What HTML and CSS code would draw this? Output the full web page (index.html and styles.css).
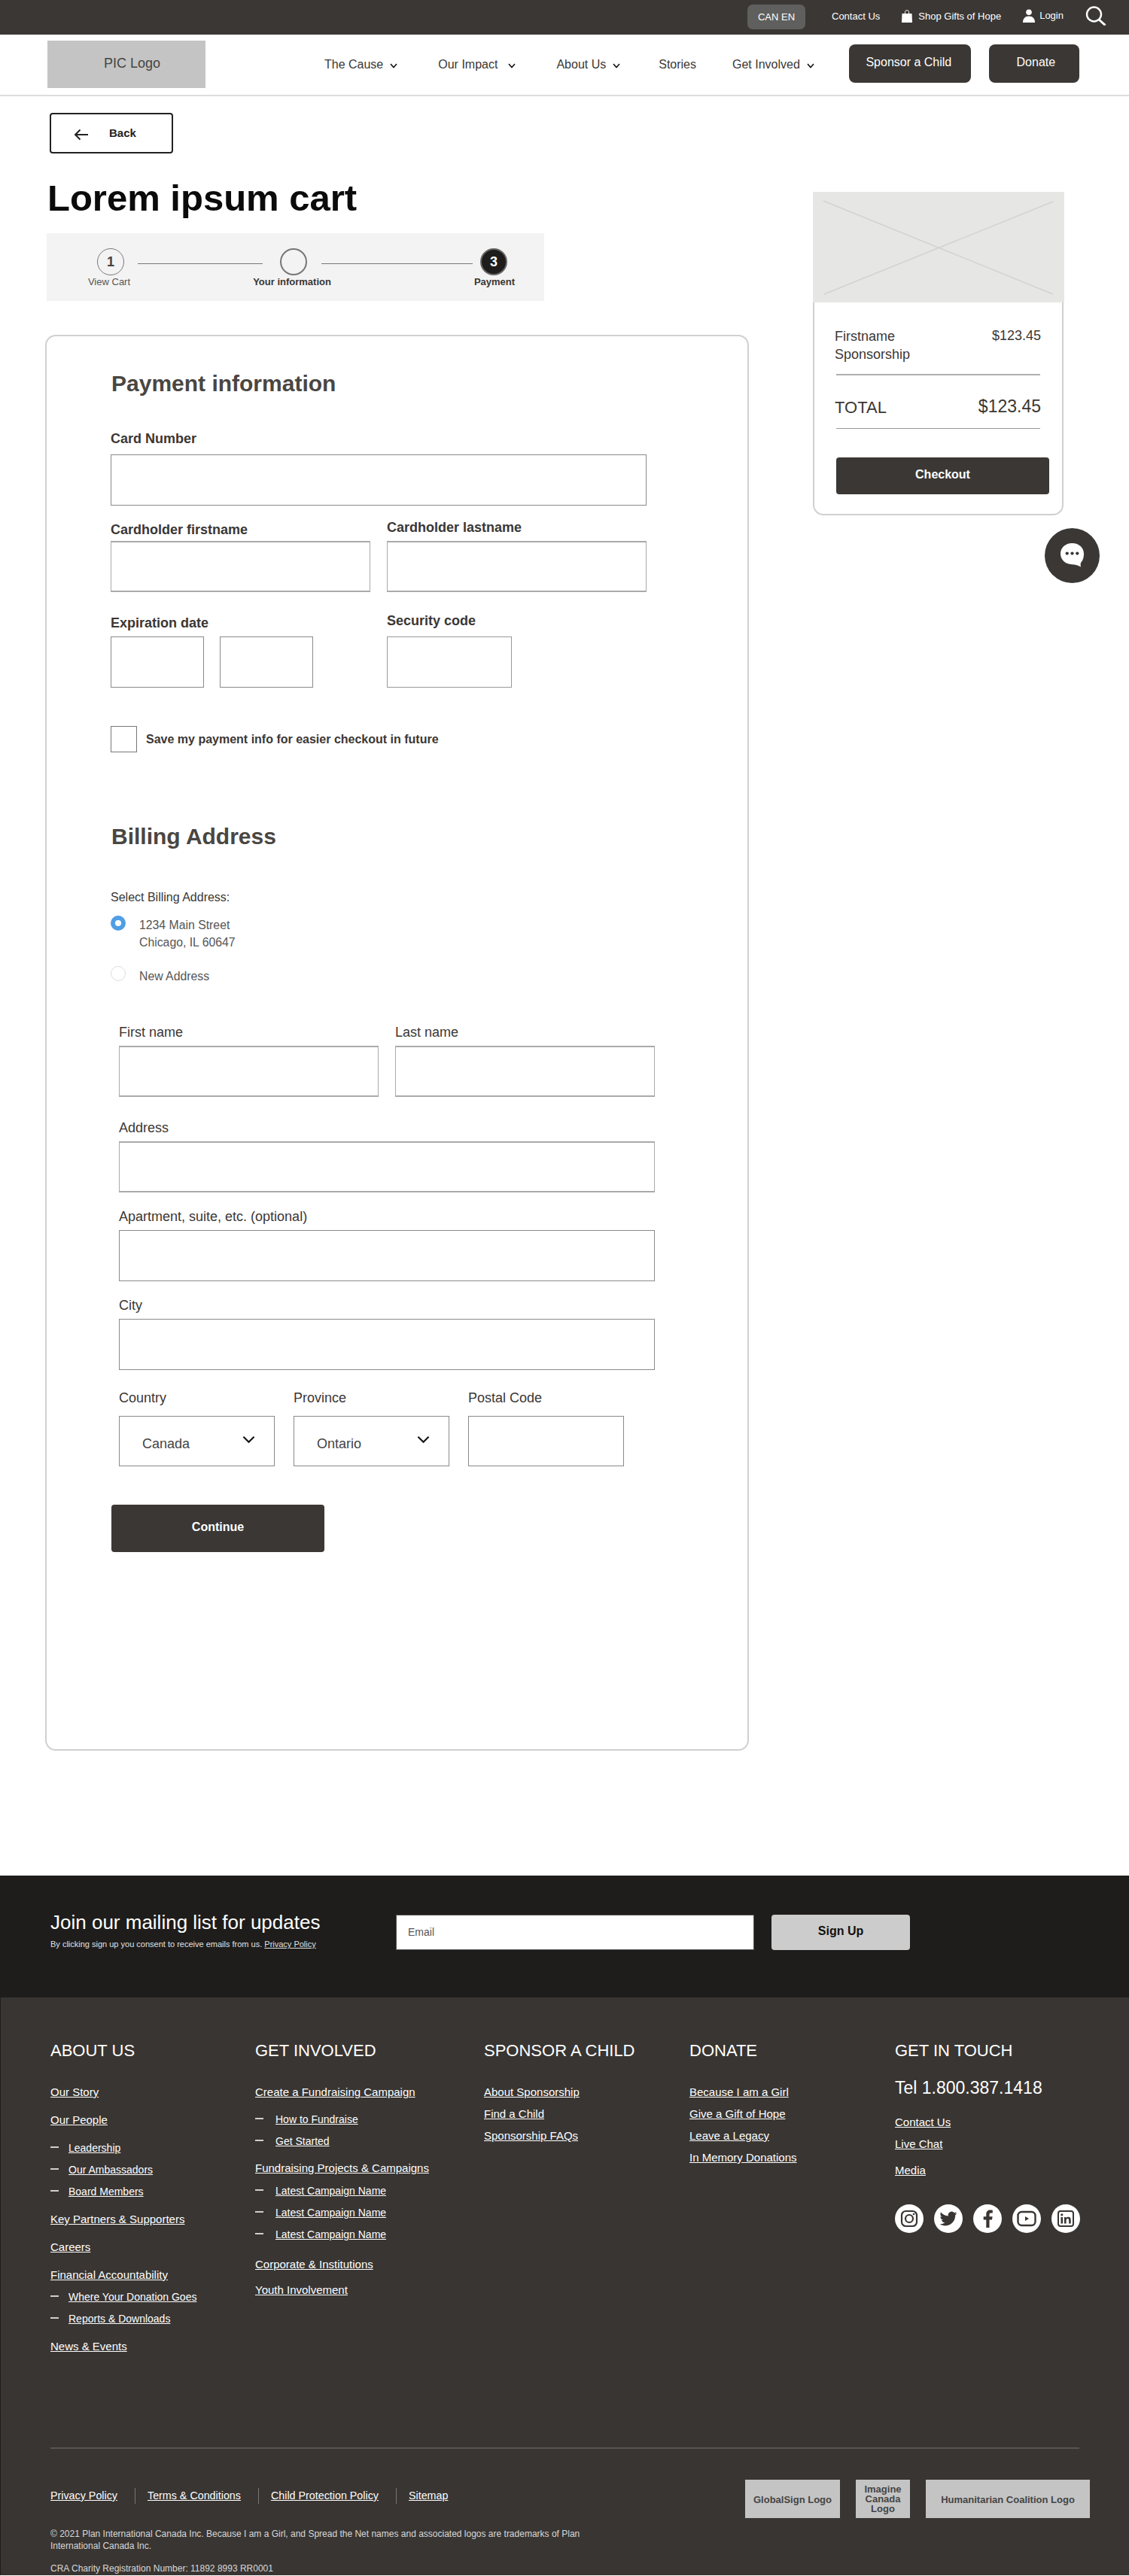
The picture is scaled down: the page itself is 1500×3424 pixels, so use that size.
FILE: index.html
```html
<!DOCTYPE html>
<html lang="en">
<head>
<meta charset="utf-8">
<title>Lorem ipsum cart</title>
<link rel="stylesheet" href="styles.css">
</head>
<body>
<header>
  <div class="topbar">
    <span class="locale">CAN EN</span>
    <a class="top-link contact">Contact Us</a>
    <svg class="bag" viewBox="0 0 14 17"><path d="M0.5 5H13.5L14 17H0L0.5 5Z" fill="#fff"/><path d="M4.5 6V3.2C4.5 1.6 5.6 .7 7 .7S9.5 1.6 9.5 3.2V6" fill="none" stroke="#fff" stroke-width="1"/></svg>
    <a class="top-link shop">Shop Gifts of Hope</a>
    <svg class="person" viewBox="0 0 16 18"><circle cx="8" cy="4.2" r="3.8" fill="#fff"/><path d="M0 18C0 12.5 3 9.5 8 9.5S16 12.5 16 18Z" fill="#fff"/></svg>
    <a class="top-link login">Login</a>
    <svg class="search" viewBox="0 0 28 26"><circle cx="11.5" cy="11" r="9.5" fill="none" stroke="#fff" stroke-width="2.4"/><path d="M18 18L26.5 25.5" stroke="#fff" stroke-width="3"/></svg>
  </div>
  <nav class="mainnav">
    <div class="logo">PIC Logo</div>
    <div class="navlinks">
      <a class="navlink cause">The Cause<svg class="chev" viewBox="0 0 10 7"><path d="M1 1L5 5.5L9 1" /></svg></a>
      <a class="navlink impact">Our Impact<svg class="chev wide" viewBox="0 0 10 7"><path d="M1 1L5 5.5L9 1" /></svg></a>
      <a class="navlink about">About Us<svg class="chev" viewBox="0 0 10 7"><path d="M1 1L5 5.5L9 1" /></svg></a>
      <a class="navlink stories">Stories</a>
      <a class="navlink involved">Get Involved<svg class="chev" viewBox="0 0 10 7"><path d="M1 1L5 5.5L9 1" /></svg></a>
      <a class="navbtn sponsor">Sponsor a Child</a>
      <a class="navbtn donate">Donate</a>
    </div>
  </nav>
</header>

<main class="page">
  <div class="leftcol">
    <a class="back"><svg class="back-arrow" viewBox="0 0 20 16"><path d="M19 8H2M8.5 1.5L2 8L8.5 14.5" fill="none" stroke="#222" stroke-width="2"/></svg><span>Back</span></a>
    <h1>Lorem ipsum cart</h1>
    <div class="stepper">
      <div class="step step-one"><span class="dot dot-done">1</span><span class="step-label">View Cart</span></div>
      <span class="step-line line-one"></span>
      <div class="step"><span class="dot dot-current"></span><span class="step-label strong">Your information</span></div>
      <span class="step-line line-two"></span>
      <div class="step step-last"><span class="dot dot-active">3</span><span class="step-label strong">Payment</span></div>
    </div>

    <form class="formcard">
      <h2>Payment information</h2>
      <label class="blabel card-label">Card Number</label>
      <input class="field full" type="text">
      <div class="row row-holder">
        <div class="col"><label class="blabel low">Cardholder firstname</label><input class="field half thick" type="text"></div>
        <div class="col"><label class="blabel high">Cardholder lastname</label><input class="field half thick" type="text"></div>
      </div>
      <div class="row row-exp">
        <div class="col exp"><label class="blabel low">Expiration date</label>
          <div class="exp-boxes"><input class="field small" type="text"><input class="field small" type="text"></div>
        </div>
        <div class="col"><label class="blabel high">Security code</label><input class="field code" type="text"></div>
      </div>
      <div class="save"><span class="checkbox"></span><span class="save-text">Save my payment info for easier checkout in future</span></div>

      <h2 class="billing-title">Billing Address</h2>
      <p class="select-label">Select Billing Address:</p>
      <div class="radio-row first"><span class="radio on"></span><span class="radio-text">1234 Main Street<br>Chicago, IL 60647</span></div>
      <div class="radio-row second"><span class="radio"></span><span class="radio-text">New Address</span></div>

      <div class="billing">
        <div class="row first-row">
          <div class="col"><label class="plabel">First name</label><input class="field half thick" type="text"></div>
          <div class="col"><label class="plabel">Last name</label><input class="field half thick" type="text"></div>
        </div>
        <div class="block addr"><label class="plabel">Address</label><input class="field full thick" type="text"></div>
        <div class="block tight"><label class="plabel">Apartment, suite, etc. (optional)</label><input class="field full" type="text"></div>
        <div class="block tight"><label class="plabel">City</label><input class="field full" type="text"></div>
        <div class="row three">
          <div class="col"><label class="plabel sel">Country</label><div class="select"><span>Canada</span><svg class="sel-chev" viewBox="0 0 18 11"><path d="M1.5 1.5L9 9L16.5 1.5"/></svg></div></div>
          <div class="col"><label class="plabel sel">Province</label><div class="select"><span>Ontario</span><svg class="sel-chev" viewBox="0 0 18 11"><path d="M1.5 1.5L9 9L16.5 1.5"/></svg></div></div>
          <div class="col"><label class="plabel sel">Postal Code</label><input class="field postal" type="text"></div>
        </div>
      </div>
      <button class="continue" type="button">Continue</button>
    </form>
  </div>

  <aside class="summary">
    <svg class="placeholder" viewBox="0 0 334 147" preserveAspectRatio="none"><rect width="334" height="147" fill="#e6e6e4"/><path d="M14 12L319 136M15 136L319 13" stroke="#d3d3d0" stroke-width="1.5" fill="none"/></svg>
    <div class="summary-body">
      <div class="line-item"><span>Firstname<br>Sponsorship</span><span class="price">$123.45</span></div>
      <hr class="rule rule-a">
      <div class="total"><span class="total-word">TOTAL</span><span class="total-price">$123.45</span></div>
      <hr class="rule rule-b">
      <button class="checkout" type="button">Checkout</button>
    </div>
  </aside>

  <div class="chat">
    <svg viewBox="0 0 34 36"><path d="M17 1C7.5 1 1 7.5 1 15.5S7.5 30 17 30C21 30 24 31 29 33.5C28.3 31.5 28.2 29.5 29 27.5C31.7 24.800 33 20.500 33 15.500C33 7.500 26.500 1 17 1Z" fill="#fff"/><circle cx="10" cy="15" r="2.200" fill="#3b3734"/><circle cx="17" cy="15" r="2.200" fill="#3b3734"/><circle cx="24" cy="15" r="2.200" fill="#3b3734"/></svg>
  </div>
</main>

<section class="news">
  <div class="news-copy">
    <h3>Join our mailing list for updates</h3>
    <p>By clicking sign up you consent to receive emails from us. <a>Privacy Policy</a></p>
  </div>
  <div class="news-form">
    <div class="email">Email</div>
    <button class="signup" type="button">Sign Up</button>
  </div>
</section>

<footer class="footer">
  <div class="cols">
    <div class="fcol">
      <h4>ABOUT US</h4>
      <ul>
        <li><a>Our Story</a></li>
        <li class="gap"><a>Our People</a></li>
        <li class="sub gap"><a>Leadership</a></li>
        <li class="sub"><a>Our Ambassadors</a></li>
        <li class="sub"><a>Board Members</a></li>
        <li class="gap"><a>Key Partners &amp; Supporters</a></li>
        <li class="gap"><a>Careers</a></li>
        <li class="gap"><a>Financial Accountability</a></li>
        <li class="sub"><a>Where Your Donation Goes</a></li>
        <li class="sub"><a>Reports &amp; Downloads</a></li>
        <li class="gap"><a>News &amp; Events</a></li>
      </ul>
    </div>
    <div class="fcol">
      <h4>GET INVOLVED</h4>
      <ul>
        <li><a>Create a Fundraising Campaign</a></li>
        <li class="sub deep gap-16"><a>How to Fundraise</a></li>
        <li class="sub deep"><a>Get Started</a></li>
        <li class="gap-16"><a>Fundraising Projects &amp; Campaigns</a></li>
        <li class="sub deep gap-10"><a>Latest Campaign Name</a></li>
        <li class="sub deep"><a>Latest Campaign Name</a></li>
        <li class="sub deep"><a>Latest Campaign Name</a></li>
        <li class="gap-20"><a>Corporate &amp; Institutions</a></li>
        <li class="gap-14"><a>Youth Involvement</a></li>
      </ul>
    </div>
    <div class="fcol">
      <h4>SPONSOR A CHILD</h4>
      <ul>
        <li><a>About Sponsorship</a></li>
        <li><a>Find a Child</a></li>
        <li><a>Sponsorship FAQs</a></li>
      </ul>
    </div>
    <div class="fcol">
      <h4>DONATE</h4>
      <ul>
        <li><a>Because I am a Girl</a></li>
        <li><a>Give a Gift of Hope</a></li>
        <li><a>Leave a Legacy</a></li>
        <li><a>In Memory Donations</a></li>
      </ul>
    </div>
    <div class="fcol">
      <h4>GET IN TOUCH</h4>
      <p class="tel">Tel 1.800.387.1418</p>
      <ul class="touch">
        <li><a>Contact Us</a></li>
        <li><a>Live Chat</a></li>
        <li class="media"><a>Media</a></li>
      </ul>
      <div class="social">
        <svg viewBox="0 0 38 38"><circle cx="19" cy="19" r="19" fill="#fff"/><rect x="9" y="9" width="20" height="20" rx="5.500" fill="none" stroke="#393532" stroke-width="2.200"/><circle cx="19" cy="19" r="5" fill="none" stroke="#393532" stroke-width="2.200"/><circle cx="25" cy="13" r="1.300" fill="#393532"/></svg>
        <svg viewBox="0 0 38 38"><circle cx="19" cy="19" r="19" fill="#fff"/><g transform="translate(7.500 7.500) scale(.96)"><path fill="#393532" d="M23.953 4.57a10 10 0 01-2.825.775 4.958 4.958 0 002.163-2.723c-.951.555-2.005.959-3.127 1.184a4.92 4.92 0 00-8.384 4.482C7.690 8.095 4.067 6.130 1.640 3.162a4.822 4.822 0 00-.666 2.475c0 1.710.870 3.213 2.188 4.096a4.904 4.904 0 01-2.228-.616v.060a4.923 4.923 0 003.946 4.827 4.996 4.996 0 01-2.212.085 4.936 4.936 0 004.604 3.417 9.867 9.867 0 01-6.102 2.105c-.390 0-.779-.023-1.170-.067a13.995 13.995 0 007.557 2.209c9.053 0 13.998-7.496 13.998-13.985 0-.210 0-.420-.015-.630A9.935 9.935 0 0024 4.590z"/></g></svg>
        <svg viewBox="0 0 38 38"><circle cx="19" cy="19" r="19" fill="#fff"/><path fill="#393532" d="M21.500 31V20.500H25L25.600 16.200H21.500V13.600C21.500 12.400 21.900 11.500 23.600 11.500H25.800V7.700C25.400 7.600 24.100 7.500 22.700 7.500C19.500 7.500 17.300 9.400 17.300 13V16.200H13.700V20.500H17.300V31Z"/></svg>
        <svg viewBox="0 0 38 38"><circle cx="19" cy="19" r="19" fill="#fff"/><rect x="7.500" y="10" width="23" height="18" rx="5" fill="none" stroke="#393532" stroke-width="2.400"/><path d="M17 16L22 19L17 22Z" fill="#393532"/></svg>
        <svg viewBox="0 0 38 38"><circle cx="19" cy="19" r="19" fill="#fff"/><rect x="9" y="9" width="20" height="20" rx="3" fill="none" stroke="#393532" stroke-width="2"/><rect x="12.500" y="17" width="2.600" height="8.500" fill="#393532"/><circle cx="13.800" cy="13.800" r="1.600" fill="#393532"/><path fill="#393532" d="M17 17H19.500V18.300C20 17.400 21 16.800 22.300 16.800C24.800 16.800 25.700 18.300 25.700 20.700V25.500H23.100V21.200C23.100 20 22.800 19.100 21.600 19.100C20.300 19.100 19.600 20 19.600 21.300V25.500H17Z"/></svg>
      </div>
    </div>
  </div>
  <hr class="foot-rule">
  <div class="foot-bottom">
    <div class="legal">
      <div class="legal-links">
        <a>Privacy Policy</a><a>Terms &amp; Conditions</a><a>Child Protection Policy</a><a>Sitemap</a>
      </div>
      <p class="copy">© 2021 Plan International Canada Inc. Because I am a Girl, and Spread the Net names and associated logos are trademarks of Plan International Canada Inc.</p>
      <p class="cra">CRA Charity Registration Number: 11892 8993 RR0001</p>
    </div>
    <div class="badges">
      <div class="badge b-global">GlobalSign Logo</div>
      <div class="badge b-imagine">Imagine Canada Logo</div>
      <div class="badge b-human">Humanitarian Coalition Logo</div>
    </div>
  </div>
</footer>
</body>
</html>
```
FILE: styles.css
```css
* { box-sizing: border-box; }
html, body { margin: 0; padding: 0; }
body { font-family: "Liberation Sans", Arial, sans-serif; color: #3b3734; background: #fff; width: 1500px; overflow-x: hidden; }
a { color: inherit; }
h1, h2, h3, h4, p, ul { margin: 0; padding: 0; }
ul { list-style: none; }
button { font-family: inherit; border: 0; cursor: pointer; }

/* top bar */
.topbar { height: 46px; background: #3b3734; display: flex; align-items: center; color: #fff; font-size: 13px; padding-left: 993px; }
.locale { width: 77px; height: 33px; margin-top: -1px; background: #5f5f5d; border-radius: 7px; display: flex; align-items: center; justify-content: center; }
.top-link { white-space: nowrap; }
.contact { margin-left: 35px; margin-top: -3px; }
.bag { width: 14px; height: 17px; margin-left: 29px; margin-top: -3px; }
.shop { margin-left: 8px; margin-top: -3px; }
.person { width: 16px; height: 18px; margin-left: 29px; margin-top: -4px; }
.login { margin-left: 6px; margin-top: -5px; }
.search { width: 28px; height: 26px; margin-left: 29px; margin-top: -4px; }

/* main nav */
.mainnav { height: 82px; border-bottom: 2px solid #ddd; display: flex; padding-left: 63px; }
.logo { width: 210px; height: 63px; margin-top: 8px; background: #c4c4c4; font-size: 18px; color: #444; padding: 19px 0 0 75px; line-height: 22px; }
.navlinks { display: flex; align-items: flex-start; padding-left: 158px; }
.navlink { font-size: 16px; line-height: 20px; margin-top: 30px; white-space: nowrap; display: flex; align-items: center; color: #3b3734; }
.chev { width: 10px; height: 7px; margin-left: 9px; margin-top: 2px; fill: none; stroke: #111; stroke-width: 1.600; }
.chev.wide { margin-left: 14px; }
.impact { margin-left: 54px; }
.about { margin-left: 54px; }
.stories { margin-left: 51px; }
.involved { margin-left: 48px; }
.navbtn { height: 51px; margin-top: 13px; background: #3b3734; color: #fff; border-radius: 8px; font-size: 16px; line-height: 48px; text-align: center; white-space: nowrap; }
.sponsor { width: 162px; margin-left: 46px; padding-right: 3px; }
.donate { width: 120px; margin-left: 24px; padding-left: 5px; }

/* page */
.page { position: relative; display: flex; align-items: flex-start; padding: 22px 0 166px 60px; }
.leftcol { width: 935px; flex: none; }
.back { display: flex; align-items: center; width: 164px; height: 54px; margin-left: 6px; border: 2px solid #222; border-radius: 4px; font-size: 15px; font-weight: bold; color: #222; }
.back-arrow { width: 20px; height: 16px; margin-left: 30px; margin-top: 3px; }
.back span { margin-left: 27px; margin-top: -1px; }
h1 { font-size: 49px; line-height: 56px; font-weight: bold; color: #0b0b0b; margin: 31px 0 0 3px; }
.stepper { width: 661px; height: 90px; margin: 19px 0 0 2px; background: #f3f3f3; display: flex; align-items: flex-start; padding: 20px 0 0 67px; }
.step { width: 36px; display: flex; flex-direction: column; align-items: center; flex: none; }
.dot { width: 36px; height: 36px; border-radius: 50%; display: flex; align-items: center; justify-content: center; font-size: 18px; font-weight: bold; flex: none; margin-top: 0; }
.dot-done { border: 1px solid #777; color: #444; }
.dot-current { border: 2px solid #777; }
.dot-active { background: #1e1d1b; border: 2px solid #666; color: #fff; }
.step-label { font-size: 13px; line-height: 16px; margin-top: 1px; white-space: nowrap; color: #555; margin-right: 4px; }
.step-label.strong { font-weight: bold; color: #3b3734; font-size: 13px; margin-right: 4px; }
.step-last .step-label.strong { margin-right: 0; margin-left: 2px; }
.step-line { height: 1px; background: #777; margin-top: 20px; flex: none; }
.line-one { width: 166px; margin: 20px 23px 0 18px; }
.line-two { width: 201px; margin: 20px 10px 0 19px; }

/* form card */
.formcard { margin-top: 45px; border: 2px solid #d0d0d0; border-radius: 14px; padding: 45px 0 262px 85px; width: 935px; }
h2 { font-size: 30px; line-height: 36px; font-weight: bold; color: #4a4641; margin-left: 1px; }
.blabel { display: block; font-size: 18px; line-height: 22px; font-weight: bold; color: #3b3734; white-space: nowrap; }
.card-label { margin-top: 44px; margin-bottom: 10px; }
.low { margin-top: 3px; margin-bottom: 4px; }
.high { margin-bottom: 7px; }
.row-exp .low { margin-bottom: 7px; }
.row-exp .high { margin-bottom: 10px; }
.plabel { display: block; font-size: 18px; line-height: 22px; margin-bottom: 7px; color: #3b3734; white-space: nowrap; }
.plabel.sel { margin-bottom: 13px; }
.field { display: block; height: 68px; border: 1px solid #8a8a8a; background: #fff; border-radius: 0; padding: 0; margin: 0; outline: 0; }
.field.thick { border-color: #aaa; border-width: 2px 1px; }
.full { width: 712px; }
.half { width: 345px; }
.small { width: 124px; }
.code { width: 166px; border-color: #999; }
.postal { width: 207px; height: 67px; }
.row { display: flex; gap: 22px; }
.col { flex: none; }
.row-holder { margin-top: 18px; }
.row-exp { margin-top: 27px; }
.col.exp { width: 345px; }
.exp-boxes { display: flex; gap: 21px; }
.save { display: flex; align-items: center; margin-top: 51px; }
.checkbox { width: 35px; height: 35px; border: 1px solid #777; flex: none; }
.save-text { margin-left: 12px; font-size: 16px; font-weight: bold; color: #3b3734; }
.billing-title { margin-top: 94px; }
.select-label { margin-top: 53px; font-size: 16px; line-height: 20px; color: #3b3734; }
.radio-row { display: flex; }
.radio-row.first { margin-top: 14px; }
.radio-row.second { margin-top: 20px; }
.radio { width: 20px; height: 20px; border-radius: 50%; border: 1px solid #ddd; flex: none; background: #fff; }
.radio.on { border: 6px solid #4f9ee6; }
.radio-text { margin-left: 18px; font-size: 15.800px; line-height: 23px; color: #555; padding-top: 1px; }
.radio-row.second .radio-text { padding-top: 2px; }
.billing { margin-left: 11px; }
.first-row { margin-top: 52px; }
.block.addr { margin-top: 30px; }
.block.tight { margin-top: 21px; }
.row.three { margin-top: 26px; gap: 25px; }
.select { width: 207px; height: 67px; border: 1px solid #8a8a8a; display: flex; align-items: center; justify-content: space-between; padding: 0 25px 0 30px; font-size: 18px; color: #444; }
.select span { margin-top: 8px; }
.sel-chev { width: 17px; height: 11px; fill: none; stroke: #111; stroke-width: 2.200; margin-top: -5px; }
.continue { display: block; width: 283px; height: 63px; margin: 51px 0 0 1px; background: #3b3734; color: #fff; border-radius: 4px; font-size: 16px; font-weight: bold; padding: 0 0 4px; }

/* summary */
.summary { width: 334px; margin: 105px 0 0 85px; flex: none; }
.placeholder { display: block; width: 334px; height: 147px; }
.summary-body { width: 333px; border: 2px solid #d0d0d0; border-top: 0; border-radius: 0 0 14px 14px; padding: 33px 17px 26px 27px; font-size: 18px; line-height: 24px; color: #3b3734; }
.line-item { display: flex; justify-content: space-between; margin-right: 11px; }
.price { line-height: 22px; }
.rule { border: 0; margin: 0 12px 0 2px; background: #b0b0b0; }
.rule-a { height: 2px; margin-top: 14px; }
.rule-b { height: 1px; margin-top: 12px; background: #999; }
.total { display: flex; justify-content: space-between; margin: 27px 11px 0 0; line-height: 30px; }
.total-word { font-size: 22px; padding-top: 1px; }
.total-price { font-size: 23px; line-height: 28px; }
.checkout { display: block; width: 283px; height: 49px; margin: 38px 0 0 2px; background: #3b3734; color: #fff; font-size: 16px; font-weight: bold; border-radius: 4px; padding: 0 0 4px; }
.chat { position: absolute; left: 1388px; top: 574px; width: 73px; height: 73px; border-radius: 50%; background: #3b3734; display: flex; align-items: center; justify-content: center; }
.chat svg { width: 33px; height: 35px; }

/* newsletter */
.news { height: 162px; background: #1e1d1b; display: flex; padding: 47px 0 0 67px; color: #fff; }
.news-copy { width: 459px; flex: none; }
.news h3 { font-size: 26px; line-height: 30px; font-weight: normal; white-space: nowrap; }
.news p { font-size: 11px; line-height: 16px; margin-top: 6px; color: #e0e0e0; white-space: nowrap; }
.news p a { text-decoration: underline; }
.news-form { display: flex; gap: 23px; margin-top: 5px; }
.email { width: 476px; height: 47px; background: #fff; border: 1px solid #555; color: #555; font-size: 14px; padding: 14px 0 0 15px; line-height: 16px; }
.signup { width: 184px; height: 47px; background: #ccc; color: #111; font-size: 16px; font-weight: bold; border-radius: 4px; padding: 0 0 4px; }

/* footer */
.footer { background: #393532; border-left: 1px solid #1e1d1b; color: #fff; padding: 58px 52px 1px 66px; height: 768px; }
.cols { display: grid; grid-template-columns: 272px 304px 273px 273px 1fr; height: 540px; }
h4 { font-size: 22px; line-height: 26px; font-weight: normal; white-space: nowrap; }
.fcol ul { margin-top: 32px; }
.fcol li { font-size: 15px; line-height: 20px; margin-top: 9px; position: relative; white-space: nowrap; }
.fcol li a { text-decoration: underline; }
.fcol li.sub { font-size: 14px; padding-left: 24px; }
.fcol li.sub.deep { padding-left: 27px; }
.fcol li.sub::before { content: ""; position: absolute; left: 0; top: 8px; width: 11px; height: 1.500px; background: #cfcfcf; }
.fcol li.gap { margin-top: 17px; }
.fcol li.gap-10 { margin-top: 10px; }
.fcol li.gap-14 { margin-top: 14px; }
.fcol li.gap-16 { margin-top: 16px; }
.fcol li.gap-20 { margin-top: 20px; }
.tel { font-size: 23px; line-height: 28px; margin-top: 22px; white-space: nowrap; }
.fcol ul.touch { margin-top: 22px; }
.fcol li.media { margin-top: 15px; }
.social { display: flex; gap: 14px; margin-top: 35px; }
.social svg { width: 38px; height: 38px; flex: none; display: block; }
.foot-rule { border: 0; height: 2px; background: #555; width: 1367px; margin: 0; }
.foot-bottom { display: flex; justify-content: space-between; margin-top: 41px; }
.legal { width: 720px; padding-top: 11px; }
.legal-links { display: flex; font-size: 14.300px; line-height: 21px; }
.legal-links a { text-decoration: underline; white-space: nowrap; }
.legal-links a + a { margin-left: 23px; padding-left: 17px; position: relative; }
.legal-links a + a::before { content: ""; position: absolute; left: 0; top: 0; width: 1px; height: 21px; background: #777; }
.copy { margin-top: 32px; font-size: 12px; line-height: 16px; color: #d8d8d8; }
.cra { margin-top: 14px; font-size: 12px; line-height: 16px; color: #d8d8d8; white-space: nowrap; }
.badges { display: flex; gap: 21px; }
.badge { height: 51px; background: #c4c4c4; color: #444; font-size: 13px; line-height: 13px; font-weight: bold; display: flex; align-items: center; justify-content: center; text-align: center; padding-top: 2px; }
.b-global { width: 126px; }
.b-imagine { width: 72px; padding: 0 8px; }
.b-human { width: 218px; }
```
